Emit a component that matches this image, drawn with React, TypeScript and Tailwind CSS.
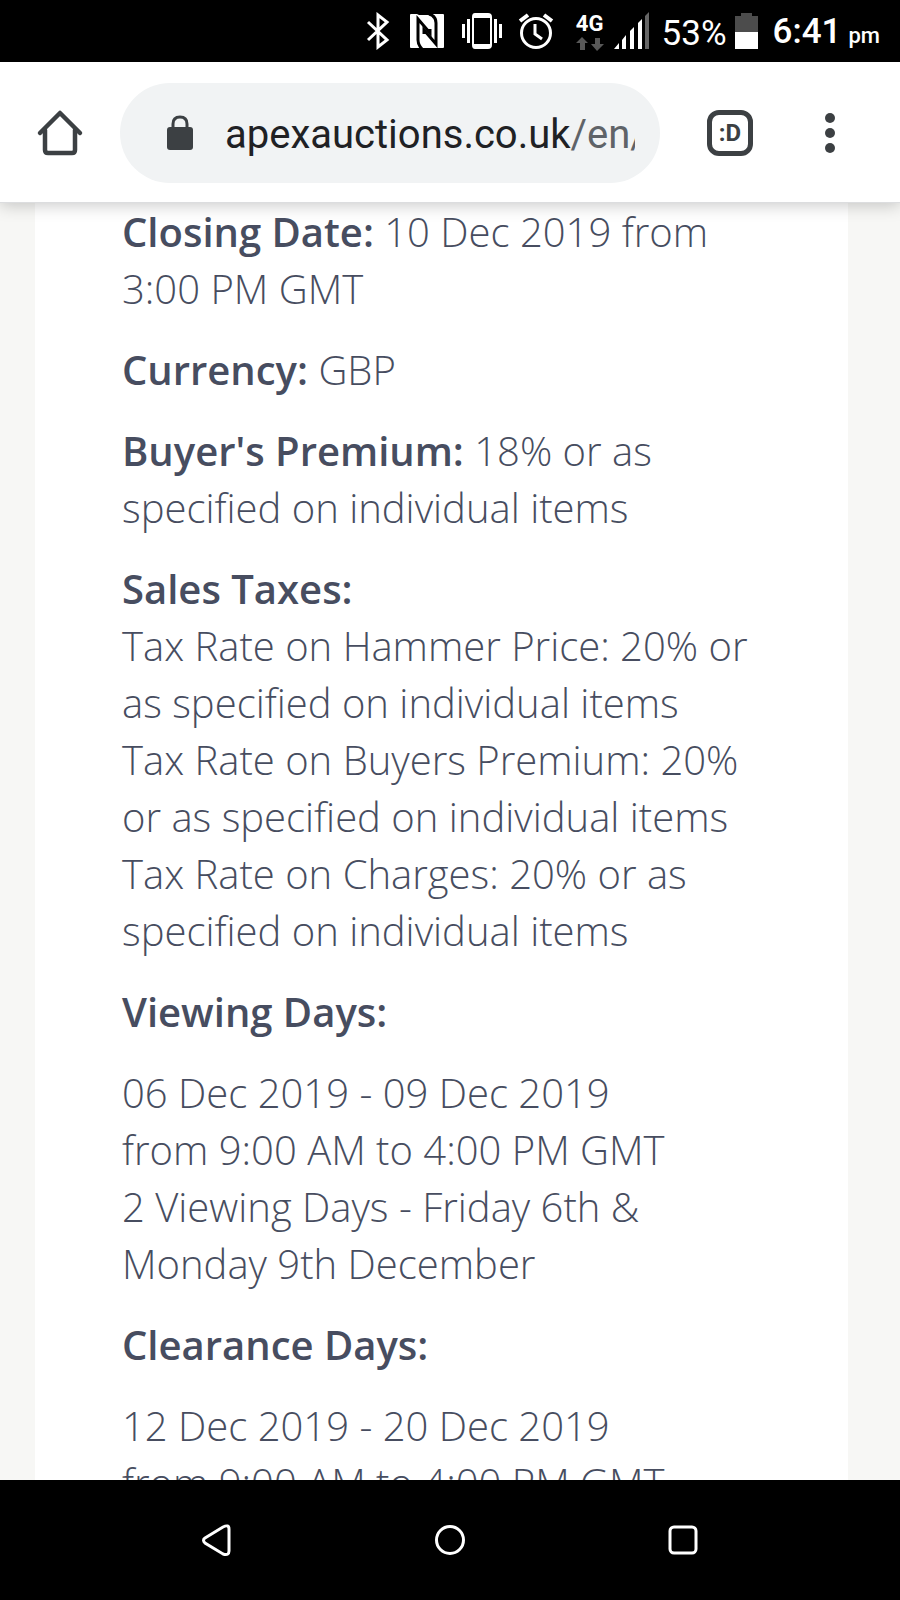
import type { ReactNode } from 'react';

function StatusBar() {
  return (
    <header className="flex h-[62px] shrink-0 items-center justify-end bg-black pr-5 font-['Roboto',sans-serif] text-white">
      <svg width="24" height="38" viewBox="0 0 24 38" fill="none" stroke="currentColor" strokeWidth="3" className="mr-5" aria-label="Bluetooth">
        <path d="M2 10 L21 28 L12 35 V3 L21 10 L2 28" />
      </svg>
      <svg width="34" height="34" viewBox="0 0 34 34" className="mr-[18px]" aria-label="NFC">
        <rect width="34" height="34" rx="1" fill="#fff" />
        <path d="M12 35 Q8 31 8 26 V5 L20 19 V15" fill="none" stroke="#000" strokeWidth="3" />
        <path d="M19 0 Q26 2 26 9 V30 L14 16 V20" fill="none" stroke="#000" strokeWidth="3" />
        <path d="M7 0 H19 Q23 2 23 5 L23 1 H9 Z" fill="#000" />
      </svg>
      <svg width="40" height="38" viewBox="0 0 40 38" className="mr-4" fill="currentColor" aria-label="Vibrate">
        <path fillRule="evenodd" d="M13 1 H26 Q30 1 30 5 V33 Q30 37 26 37 H13 Q10 37 10 33 V5 Q10 1 13 1 Z M12 6 V32 H28 V6 Z" />
        <path d="M0 12 H3 V26 H0 Z M5 7 H8 V31 H5 Z M32 7 H35 V31 H32 Z M37 12 H40 V26 H37 Z" />
      </svg>
      <svg width="36" height="38" viewBox="0 0 36 38" className="mr-[22px]" fill="none" stroke="currentColor" aria-label="Alarm">
        <circle cx="18" cy="21" r="14.5" strokeWidth="3" />
        <path d="M17 12 V22 L24 27" strokeWidth="3" />
        <path d="M2 9 L10 3 M26 3 L34 9" strokeWidth="4" />
      </svg>
      <div className="mr-2.5 flex w-7 flex-col items-center gap-1 pt-1">
        <span className="text-[22px] leading-[18px] font-bold">4G</span>
        <svg width="28" height="14" viewBox="0 0 28 14" fill="#585858" aria-hidden="true">
          <path d="M6 0 L12 6 H9 V13 H4 V6 H0 Z M19 1 H24 V7 H28 L21 14 L15 7 H19 Z" />
        </svg>
      </div>
      <svg width="36" height="38" viewBox="0 0 36 38" className="mr-3" fill="currentColor" aria-label="Signal">
        <path d="M0 37 L5 31 V37 Z M8 37 V28 L12 23 V37 Z M16 37 V19 L20 15 V37 Z M24 37 V11 L28 7 V37 Z" />
        <path d="M31 37 V4 L35 0 V37 Z" fill="#666" />
      </svg>
      <span className="mr-2 pt-1.5 text-[35px] leading-10">53%</span>
      <svg width="24" height="37" viewBox="0 0 24 37" className="mr-3.5" aria-label="Battery">
        <path d="M6 0 H17 V3 H23 V19 H0 V3 H6 Z" fill="#4c4c4c" />
        <path d="M0 19 H23 V36 H0 Z" fill="#fff" />
      </svg>
      <p className="flex items-baseline gap-[7px] pt-1.5 text-[35px] leading-10 font-medium">
        6:41 <span className="text-[22px]">pm</span>
      </p>
    </header>
  );
}

function Toolbar() {
  return (
    <nav className="relative z-10 flex h-[141px] shrink-0 items-center border-b border-[#dcdddf] bg-white pt-px pr-[60px] pl-9 font-['Roboto',sans-serif] text-[#3c4043] shadow-[0_2px_16px_rgba(0,0,0,0.22)]">
      <button type="button" aria-label="Home" className="mr-9 shrink-0">
        <svg width="48" height="48" viewBox="0 0 48 48" fill="none" stroke="currentColor" strokeWidth="4.5" strokeLinecap="round" strokeLinejoin="round">
          <path d="M4 24 L24 4 L44 24" />
          <path d="M9 21 V41 Q9 44 12 44 H36 Q39 44 39 41 V21" />
        </svg>
      </button>
      <button type="button" className="flex h-[100px] min-w-0 flex-1 items-center rounded-full bg-[#f1f3f4] pr-[25px] pl-[46px] text-left">
        <svg width="28" height="36" viewBox="0 0 28 36" className="mr-[31px] shrink-0" aria-label="Secure">
          <rect x="1" y="12" width="26" height="23" rx="3" fill="currentColor" />
          <path d="M7 13 V9 Q7 2 14 2 Q21 2 21 9 V13" fill="none" stroke="currentColor" strokeWidth="3" />
        </svg>
        <span className="overflow-hidden pt-1 text-[40px] leading-[48px] whitespace-nowrap text-[#202124]">
          apexauctions.co.uk<span className="text-[#5f6368]">/en/</span>
        </span>
      </button>
      <button type="button" aria-label="Open tabs" className="ml-[47px] flex size-[46px] shrink-0 items-center justify-center rounded-xl border-5 border-current text-2xl font-bold">
        :D
      </button>
      <button type="button" aria-label="Menu" className="ml-[67px] shrink-0">
        <svg width="20" height="42" viewBox="0 0 20 42" fill="currentColor">
          <circle cx="10" cy="6" r="5" />
          <circle cx="10" cy="21" r="5" />
          <circle cx="10" cy="36" r="5" />
        </svg>
      </button>
    </nav>
  );
}

function Label({ children }: { children: ReactNode }) {
  return <strong className="font-semibold">{children}</strong>;
}

function AuctionDetails() {
  return (
    <main className="min-h-0 flex-1 overflow-hidden bg-[#f7f7f5] pr-[52px] pl-[35px]">
      <article className="flex flex-col gap-6 bg-white px-[87px] font-['Open_Sans',sans-serif] text-[40px] leading-[57px] font-light text-[#474d60]">
        <p>
          <Label>Closing Date:</Label> 10 Dec 2019 from<br />
          3:00 PM GMT
        </p>
        <p><Label>Currency:</Label> GBP</p>
        <p>
          <Label>Buyer's Premium:</Label> 18% or as<br />
          specified on individual items
        </p>
        <p>
          <Label>Sales Taxes:</Label><br />
          Tax Rate on Hammer Price: 20% or<br />
          as specified on individual items<br />
          Tax Rate on Buyers Premium: 20%<br />
          or as specified on individual items<br />
          Tax Rate on Charges: 20% or as<br />
          specified on individual items
        </p>
        <p><Label>Viewing Days:</Label></p>
        <p>
          06 Dec 2019 - 09 Dec 2019<br />
          from 9:00 AM to 4:00 PM GMT<br />
          2 Viewing Days - Friday 6th &amp;<br />
          Monday 9th December
        </p>
        <p><Label>Clearance Days:</Label></p>
        <p>
          12 Dec 2019 - 20 Dec 2019<br />
          from 9:00 AM to 4:00 PM GMT
        </p>
      </article>
    </main>
  );
}

function NavigationBar() {
  return (
    <footer className="flex h-[120px] shrink-0 items-center justify-center gap-[201px] bg-black text-white">
      <button type="button" aria-label="Back">
        <svg width="32" height="34" viewBox="0 0 32 34" fill="none" stroke="currentColor" strokeWidth="3">
          <path d="M4 15 L22 4 Q28 1 28 6 V28 Q28 33 22 31 L4 20 Q1 17 4 15 Z" />
        </svg>
      </button>
      <button type="button" aria-label="Home screen">
        <svg width="32" height="32" viewBox="0 0 32 32" fill="none" stroke="currentColor" strokeWidth="3">
          <circle cx="16" cy="16" r="13.5" />
        </svg>
      </button>
      <button type="button" aria-label="Recent apps">
        <svg width="32" height="32" viewBox="0 0 32 32" fill="none" stroke="currentColor" strokeWidth="3">
          <rect x="3" y="3" width="26" height="26" rx="4" />
        </svg>
      </button>
    </footer>
  );
}

function App() {
  return (
    <div className="flex h-screen flex-col overflow-hidden">
      <StatusBar />
      <Toolbar />
      <AuctionDetails />
      <NavigationBar />
    </div>
  );
}

export default App;
